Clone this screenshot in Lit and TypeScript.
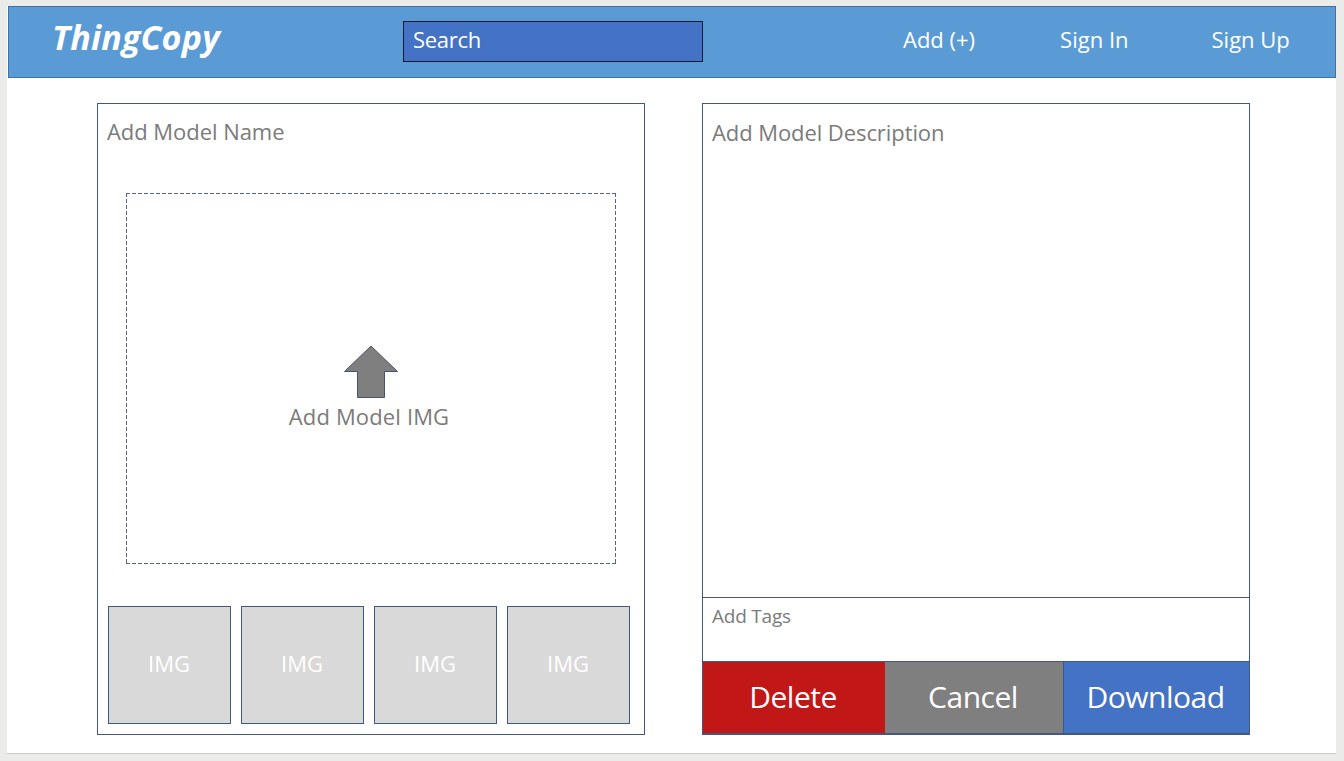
import { LitElement, css, html } from 'lit';
import { customElement } from 'lit/decorators.js';

@customElement('app-root')
export class AppRoot extends LitElement {
  render() {
    return html`
      <div class="slide">
        <header class="topbar">
          <div class="logo">ThingCopy</div>
          <div class="search">Search</div>
          <nav class="links">
            <span class="add">Add (+)</span>
            <span class="signin">Sign In</span>
            <span class="signup">Sign Up</span>
          </nav>
        </header>
        <main class="content">
          <section class="panel left">
            <div class="model-name">Add Model Name</div>
            <div class="dropzone">
              <svg class="arrow" width="56" height="54" viewBox="0 0 56 54">
                <path
                  d="M27 1 L53.5 26.5 L40.5 26.5 L40.5 52.5 L13.5 52.5 L13.5 26.5 L0.5 26.5 Z"
                  fill="#7f7f7f"
                  stroke="#44546a"
                  stroke-width="1"
                />
              </svg>
              <div class="drop-label">Add Model IMG</div>
            </div>
            <div class="thumbs">
              ${[1, 2, 3, 4].map(() => html`<div class="thumb">IMG</div>`)}
            </div>
          </section>
          <section class="panel right">
            <div class="description">Add Model Description</div>
            <div class="tags">Add Tags</div>
            <div class="actions">
              <div class="action delete">Delete</div>
              <div class="action cancel">Cancel</div>
              <div class="action download">Download</div>
            </div>
          </section>
        </main>
      </div>
    `;
  }

  static styles = css`
    :host {
      display: block;
      height: 761px;
      overflow: hidden;
      padding: 6px 8px 7px 7px;
      box-sizing: border-box;
      background: #ebebe9;
      font-family: 'Open Sans', 'Noto Sans', sans-serif;
    }

    .slide {
      height: 748px;
      box-sizing: border-box;
      background: #fff;
      border-bottom: 1px solid #c9c9c7;
      padding-left: 1px;
    }

    .topbar {
      display: flex;
      align-items: center;
      height: 72px;
      box-sizing: border-box;
      background: #5b9bd5;
      border: 1px solid #41719c;
      color: #fff;
    }

    .logo {
      width: 351px;
      margin: -10px 0 0 43px;
      font-size: 34px;
      font-weight: 700;
      font-style: italic;
      letter-spacing: 0.2px;
      flex: none;
    }

    .search {
      width: 300px;
      height: 41px;
      box-sizing: border-box;
      margin-top: -1px;
      padding-left: 9px;
      line-height: 34px;
      font-size: 22px;
      letter-spacing: -0.3px;
      background: #4472c4;
      border: 1px solid #0b1a33;
      flex: none;
    }

    .links {
      display: flex;
      margin-top: -6px;
      font-size: 22px;
      line-height: 36px;
      height: 36px;
    }

    .add {
      margin-left: 200px;
    }

    .signin {
      margin-left: 85px;
    }

    .signup {
      margin-left: 83px;
    }

    .content {
      display: flex;
      gap: 57px;
      padding: 25px 0 0 89px;
    }

    .panel {
      width: 548px;
      height: 632px;
      box-sizing: border-box;
      border: 1px solid #41587f;
      display: flex;
      flex-direction: column;
      color: #7b7b7b;
    }

    .model-name {
      height: 89px;
      padding: 11px 0 0 9px;
      box-sizing: border-box;
      font-size: 22px;
      line-height: 32px;
      letter-spacing: -0.05px;
    }

    .dropzone {
      width: 490px;
      height: 371px;
      margin-left: 28px;
      box-sizing: border-box;
      display: flex;
      flex-direction: column;
      align-items: center;
      padding-top: 152px;
      font-size: 22px;
      letter-spacing: 0.15px;
      background-image:
        repeating-linear-gradient(to right, #526589 0 4px, transparent 4px 6px),
        repeating-linear-gradient(to right, #526589 0 4px, transparent 4px 6px),
        repeating-linear-gradient(to bottom, #526589 0 4px, transparent 4px 6px),
        repeating-linear-gradient(to bottom, #526589 0 4px, transparent 4px 6px);
      background-size:
        100% 1px,
        100% 1px,
        1px 100%,
        1px 100%;
      background-position:
        0 0,
        0 100%,
        0 0,
        100% 0;
      background-repeat: no-repeat;
    }

    .arrow {
      display: block;
      margin-left: 1px;
    }

    .drop-label {
      line-height: 32px;
      margin: 1px 0 0 -4px;
    }

    .thumbs {
      display: flex;
      gap: 10px;
      margin: 42px 0 0 10px;
    }

    .thumb {
      width: 123px;
      height: 118px;
      box-sizing: border-box;
      padding: 0 1px 4px 0;
      background: #d9d9d9;
      border: 1px solid #41587f;
      color: #fff;
      display: flex;
      align-items: center;
      justify-content: center;
      font-size: 22px;
    }

    .description {
      flex: 1;
      padding: 12px 0 0 9px;
      font-size: 22px;
      line-height: 32px;
      letter-spacing: -0.08px;
    }

    .tags {
      height: 64px;
      box-sizing: border-box;
      border-top: 1px solid #41587f;
      padding: 3px 0 0 9px;
      font-size: 19px;
      line-height: 30px;
      letter-spacing: -0.22px;
    }

    .actions {
      display: flex;
      height: 74px;
      margin-bottom: -1px;
      color: #fff;
      font-size: 30px;
      letter-spacing: -0.5px;
      border-top: 1px solid #41587f;
      border-bottom: 2px solid #41587f;
      box-sizing: border-box;
    }

    .action {
      display: flex;
      align-items: center;
      justify-content: center;
      box-sizing: border-box;
      padding: 0 2px 2px 0;
    }

    .delete {
      width: 182px;
      background: #c21717;
    }

    .cancel {
      width: 178px;
      background: #7f7f7f;
    }

    .download {
      flex: 1;
      background: #4472c4;
      border-left: 1px solid #41587f;
    }
  `;
}

declare global {
  interface HTMLElementTagNameMap {
    'app-root': AppRoot;
  }
}
